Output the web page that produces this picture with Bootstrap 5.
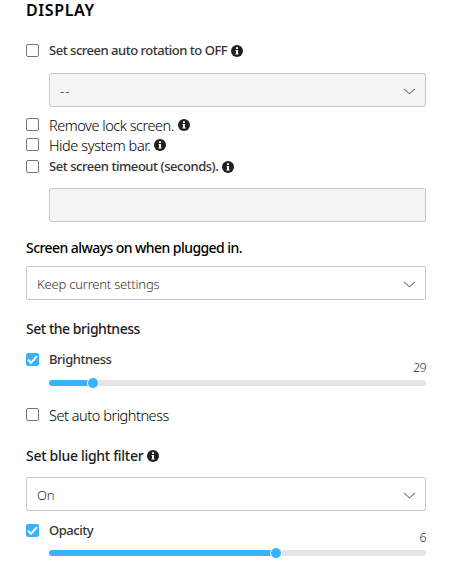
<!DOCTYPE html>
<html lang="en">
<head>
<meta charset="utf-8">
<meta name="viewport" content="width=device-width, initial-scale=1">
<title>Display</title>
<link href="https://cdn.jsdelivr.net/npm/bootstrap@5.3.0/dist/css/bootstrap.min.css" rel="stylesheet">
<style>
body{font-family:"Noto Sans","Open Sans",sans-serif;color:#000;background:#fff}
.settings{width:454px;padding:0 28px 0 26px}
.page-title{font-size:16px;font-weight:600;line-height:21px;letter-spacing:.6px}
.line{height:19px;line-height:19px}
.group-label{height:21px;font-size:14px;font-weight:500;letter-spacing:-.46px;line-height:21px;white-space:nowrap;color:#1c1c1c}
.always{color:#000;letter-spacing:-.56px}
.filter{letter-spacing:-.3px}
.line label{white-space:nowrap}
.strong{font-size:13px;font-weight:500;letter-spacing:-.45px;color:#333}
.rotation{letter-spacing:-.48px}
.soft{font-size:14.5px;font-weight:300;letter-spacing:-.46px;color:#000;position:relative;top:1px}
.sysbar{letter-spacing:-.4px}
.settings .form-check-input{width:13px;height:13px;margin:0 10px 0 0;border:1px solid #767676;border-radius:2px;flex:none}
.settings .form-check-input:checked{background-color:#38b1ff;border-color:#38b1ff;background-size:13px;background-image:url("data:image/svg+xml,%3Csvg xmlns='http://www.w3.org/2000/svg' viewBox='0 0 13 13'%3E%3Cpath d='M2 6.8l3 3 6-6.6' fill='none' stroke='white' stroke-width='2'/%3E%3C/svg%3E")}
.info{width:12px;height:12px;margin-left:4px;flex:none}
.indent{margin-left:23px}
.settings .field{height:34px;border:1px solid #c8c8c8;border-radius:2px;padding:2px 30px 0 10px;font-size:13px;font-weight:300;letter-spacing:-.2px;color:#333;line-height:30px;background-color:#fff}
.settings .form-select.field{background-image:url("data:image/svg+xml,%3Csvg xmlns='http://www.w3.org/2000/svg' viewBox='0 0 13 7'%3E%3Cpath d='M1 .8l5.5 5L12 .8' fill='none' stroke='%23777' stroke-width='1.1'/%3E%3C/svg%3E");background-size:13px 7px;background-position:right 9px top 14px}
.settings .field.off{background-color:#f4f4f4;color:#111;letter-spacing:1px}
.amount{align-self:flex-end;font-size:12.5px;font-weight:300;color:#333;height:25px;line-height:25px;letter-spacing:-.6px}
.track{height:6px;border-radius:3px;background:#e5e5e5}
.fill{height:6px;border-radius:3px;background:#38b1ff;position:relative}
.fill::after{content:"";position:absolute;right:-6px;top:-3px;width:12px;height:12px;border-radius:50%;background:#38b1ff;border:1px solid #fff}
/* vertical rhythm */
.gap-a{margin-top:20px}.gap-b{margin-top:13px}.gap-c{margin-top:1px}.gap-d{margin-top:3px}
.gap-e{margin-top:12px}.gap-f{margin-top:15px}.gap-g{margin-top:18px}.gap-h{margin-top:11px}
.gap-i{margin-top:19px}.gap-j{margin-top:21px}.gap-k{margin-top:10px}
.tall{height:30px}.short{height:29px}
</style>
</head>
<body class="min-vh-100">
<svg class="d-none"><symbol id="info" viewBox="0 0 12 12"><circle cx="6" cy="6" r="6" fill="#231f20"/><path d="M5 2.3h2v1.6H5zM4.6 5H7v3.4h.6v1H4.4v-1H5V6h-.4z" fill="#fff"/></symbol></svg>
<main class="settings d-flex flex-column">
  <h1 class="page-title m-0">DISPLAY</h1>
  <div class="line gap-a d-flex align-items-center"><input class="form-check-input" type="checkbox" id="c1"><label class="strong rotation" for="c1">Set screen auto rotation to OFF</label><svg class="info"><use href="#info"/></svg></div>
  <div class="indent gap-b"><select class="form-select field off"><option>--</option></select></div>
  <div class="line mt-2 d-flex align-items-center"><input class="form-check-input" type="checkbox" id="c2"><label class="soft" for="c2">Remove lock screen.</label><svg class="info"><use href="#info"/></svg></div>
  <div class="line gap-c d-flex align-items-center"><input class="form-check-input" type="checkbox" id="c3"><label class="soft sysbar" for="c3">Hide system bar.</label><svg class="info"><use href="#info"/></svg></div>
  <div class="line gap-d d-flex align-items-center"><input class="form-check-input" type="checkbox" id="c4"><label class="strong" for="c4">Set screen timeout (seconds).</label><svg class="info"><use href="#info"/></svg></div>
  <div class="indent gap-e"><input class="form-control field off" type="text"></div>
  <div class="group-label always gap-f">Screen always on when plugged in.</div>
  <select class="form-select field mt-2"><option>Keep current settings</option></select>
  <div class="group-label gap-g">Set the brightness</div>
  <div class="tall gap-h d-flex justify-content-between"><div class="line d-flex align-items-center"><input class="form-check-input" type="checkbox" id="c5" checked><label class="strong" for="c5">Brightness</label></div><span class="amount">29</span></div>
  <div class="track indent"><div class="fill" style="width:11.7%"></div></div>
  <div class="line gap-i d-flex align-items-center"><input class="form-check-input" type="checkbox" id="c6"><label class="soft" for="c6">Set auto brightness</label></div>
  <div class="group-label filter gap-j d-flex align-items-center">Set blue light filter<svg class="info"><use href="#info"/></svg></div>
  <select class="form-select field gap-h"><option>On</option></select>
  <div class="short gap-k d-flex justify-content-between"><div class="line d-flex align-items-center"><input class="form-check-input" type="checkbox" id="c7" checked><label class="strong" for="c7">Opacity</label></div><span class="amount">6</span></div>
  <div class="track indent"><div class="fill" style="width:60.2%"></div></div>
</main>
<script src="https://cdn.jsdelivr.net/npm/bootstrap@5.3.0/dist/js/bootstrap.bundle.min.js"></script>
</body>
</html>
